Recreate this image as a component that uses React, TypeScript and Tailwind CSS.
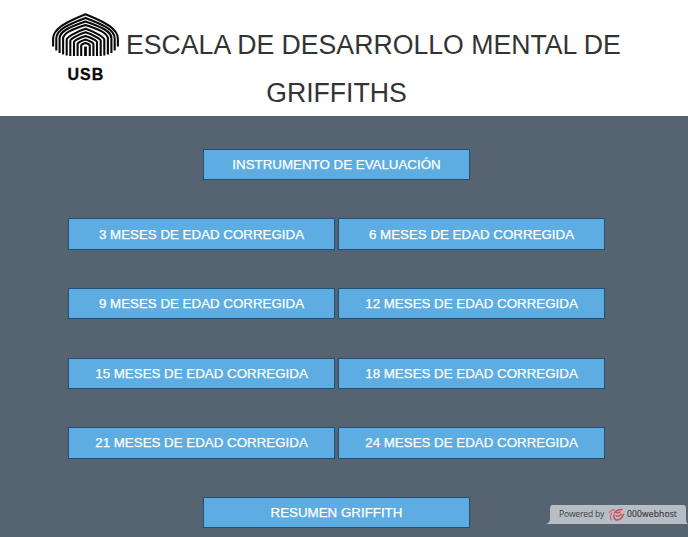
const rows = [
  ["INSTRUMENTO DE EVALUACIÓN"],
  ["3 MESES DE EDAD CORREGIDA", "6 MESES DE EDAD CORREGIDA"],
  ["9 MESES DE EDAD CORREGIDA", "12 MESES DE EDAD CORREGIDA"],
  ["15 MESES DE EDAD CORREGIDA", "18 MESES DE EDAD CORREGIDA"],
  ["21 MESES DE EDAD CORREGIDA", "24 MESES DE EDAD CORREGIDA"],
  ["RESUMEN GRIFFITH"],
];

// Each arch: half width, peak height, shoulder height, foot height.
const arches = [
  [32.4, 1.3, 26, 33.5],
  [29.2, 4.9, 25.5, 37.5],
  [25.9, 8.5, 25.3, 40],
  [22.4, 12.1, 25.8, 41.5],
  [18.8, 15.7, 26.4, 42.5],
  [15.2, 19.3, 27.6, 43],
  [11.5, 22.9, 29, 43],
  [7.9, 26.5, 30.8, 43],
  [4.3, 30.1, 32.4, 43],
];

function Logo() {
  return (
    <svg className="block h-[70px] w-[67px]" viewBox="0 0 67 70">
      <g fill="none" stroke="#0a0a0a" strokeWidth="2.1">
        {arches.map(([w, peak, shoulder, foot]) => {
          const h = shoulder - peak;
          const bend = w > 20 ? 0.42 : 0.12;
          return (
            <path
              key={w}
              d={`M${33.5 - w} ${foot}V${shoulder}C${33.5 - w} ${shoulder - h * bend} ${33.5 - w * 0.6} ${peak + h * 0.32} 33.5 ${peak}C${33.5 + w * 0.6} ${peak + h * 0.32} ${33.5 + w} ${shoulder - h * bend} ${33.5 + w} ${shoulder}V${foot}`}
            />
          );
        })}
        <path d="M33.5 33.5V43" strokeWidth="2.8" />
      </g>
      <text x="33.9" y="66.6" textAnchor="middle" fontSize="16" fontWeight="700" letterSpacing="1" stroke="#0a0a0a" strokeWidth=".3" fontFamily="Liberation Sans, sans-serif" fill="#0a0a0a">USB</text>
    </svg>
  );
}

export default function App() {
  return (
    <div className="relative h-[537px] w-[688px] overflow-hidden bg-[#566370] font-['Liberation_Sans',Arial,sans-serif]">
      <header className="h-[116px] bg-white text-[26.67px] leading-[49px] text-[#333]">
        <div className="flex h-[69px] items-start pl-[52px]">
          <div className="mt-[13px] shrink-0"><Logo /></div>
          <h1 className="mt-[21px] ml-[7px] scale-y-105 whitespace-nowrap">ESCALA DE DESARROLLO MENTAL DE</h1>
        </div>
        <div className="w-[673px] scale-y-105 text-center">GRIFFITHS</div>
      </header>
      <main className="flex w-[673px] flex-col gap-[38.2px] pt-[32.8px]">
        {rows.map((row) => (
          <div key={row[0]} className="flex justify-center gap-[3px]">
            {row.map((label) => (
              <button key={label} className="h-[31.4px] w-[267px] border border-[#1f5078] bg-[#5dade2] text-[13.333px] leading-[15px] text-white [-webkit-text-stroke:0.25px_white]">{label}</button>
            ))}
          </div>
        ))}
      </main>
      <svg className="absolute top-[505px] left-[546px] h-[19px] w-[142px]" viewBox="0 0 142 19">
        <path d="M0 19Q4 18 4 14V3Q4 0 7 0H137Q140 0 140 3V14Q140 18 142 19Z" fill="#b7bdc5" />
      </svg>
      <div className="absolute top-[505px] left-[550px] flex h-[19px] w-[136px] items-center pl-[9px] font-['Open_Sans',sans-serif] text-[8.5px] text-[#383e48]">
        <span className="w-[44px] whitespace-nowrap tracking-[-0.15px]">Powered by</span>
        <svg className="ml-[5px] h-[14px] w-[17px] shrink-0" viewBox="0 0 17 14" fill="none" stroke="#d5434a" strokeLinecap="round">
          <path d="M1 4.5Q3 1.8 6 1.5M3.5 5Q1.5 8.5 3 12" strokeWidth="1" />
          <path d="M6.5 5Q8 1.8 14 1.5M6 7Q5.5 12 9.5 12Q13.5 11.5 15.5 6.5" strokeWidth="1.4" />
          <path d="M8 7.5Q10 9.5 13.5 6M8 4.5Q10 5.5 12 4" strokeWidth="1.1" />
        </svg>
        <span className="ml-[2px] whitespace-nowrap tracking-[0.15px] [-webkit-text-stroke:0.2px_#383e48]">000webhost</span>
      </div>
    </div>
  );
}
